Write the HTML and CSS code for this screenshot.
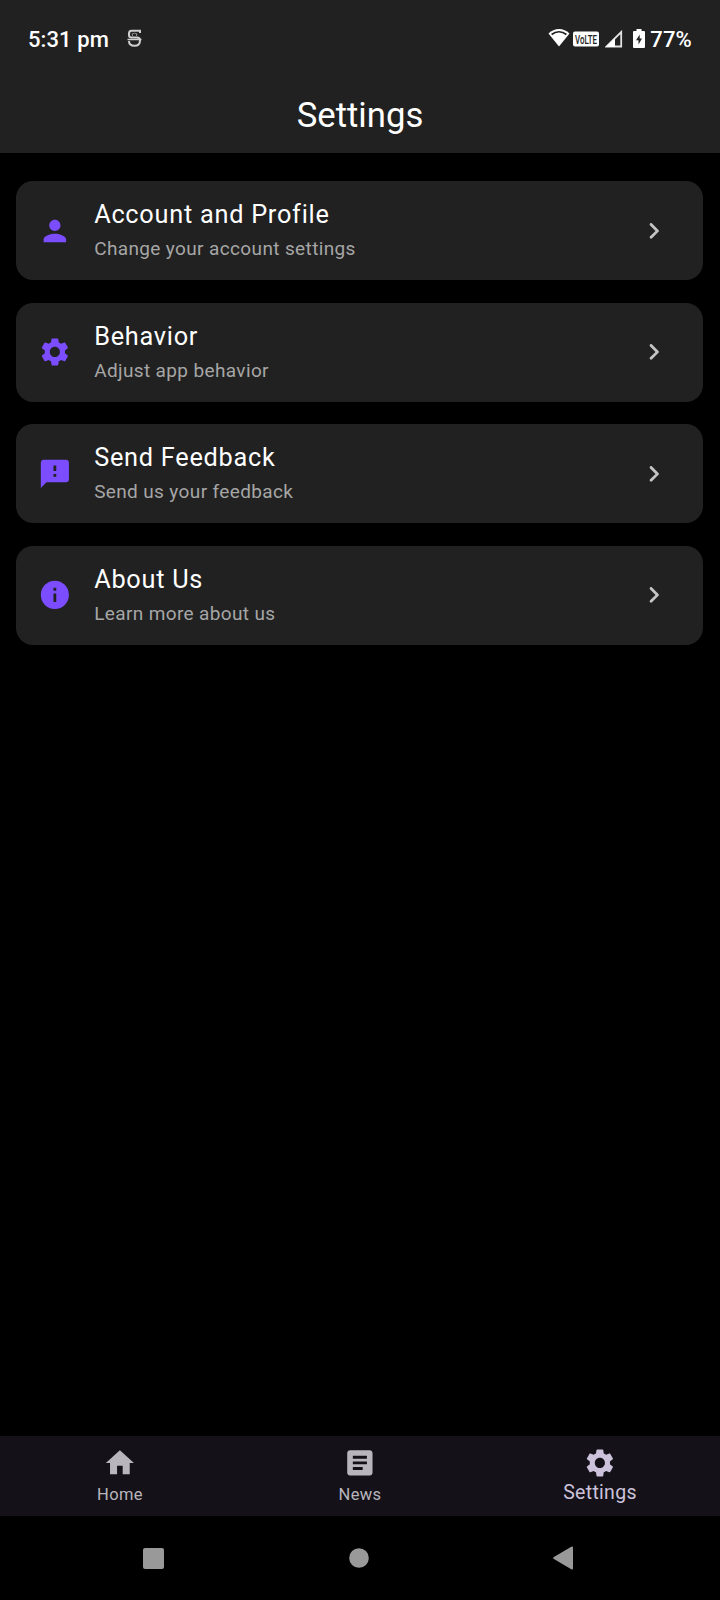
FILE: index.html
```html
<!DOCTYPE html>
<html lang="en">
<head>
<meta charset="utf-8">
<title>Settings</title>
<link rel="stylesheet" href="styles.css">
</head>
<body>
<div class="screen">
  <header class="top">
    <div class="status">
      <span class="time">5:31 pm</span>
      <svg class="s-icon" width="15" height="19" viewBox="0 0 15 19" fill="none" stroke="#cfcfcf"><path stroke-width="2" d="M13 4V1.800H4.500Q2 2 2 4.500V6Q2 8.500 4.500 8.500H10Q13 8.500 13 11.500Q13 16.800 7.500 16.800T2 12"/><path d="M4.500 5.200Q7.500 3 10.500 5.200M5.500 7V5M9.500 7V5" stroke-width="1" stroke="#8a8a8a"/><path d="M.5 10.500H14.500" stroke-width="1.500"/></svg>
      <span class="grow"></span>
      <svg class="wifi" width="22" height="20" viewBox="0 0 22 20"><path fill="#fff" d="M11 18.500.5 5.500Q5 1 11 1t10.500 4.500z"/><path d="M3.600 6.500Q7 3.800 11 3.800t7.400 2.700" fill="none" stroke="#212121" stroke-width="1.600"/></svg>
      <svg class="volte" width="26" height="16" viewBox="0 0 26 16"><rect width="26" height="15" y=".5" rx="2" fill="#fff"/><text x="2" y="12.700" textLength="22" lengthAdjust="spacingAndGlyphs" class="volte-text">VoLTE</text></svg>
      <svg class="signal" width="18" height="18" viewBox="0 0 18 18"><path d="M1.500 16.500H16.200V2z" fill="none" stroke="#e2e2e2" stroke-width="1.800"/><path d="M1 17 10 8v9z" fill="#fff"/></svg>
      <svg class="battery" width="12" height="19" viewBox="0 0 12 19"><path fill="#fff" d="M3.500 0h5v2H11q1 0 1 1v15q0 1-1 1H1q-1 0-1-1V3q0-1 1-1h2.500z"/><path fill="#212121" d="M6.700 5.500 3 11.300H5.500V15.500L9 9.500H6.700z"/></svg>
      <span class="percent">77%</span>
    </div>
    <h1 class="title">Settings</h1>
  </header>
  <main class="list">
    <div class="card">
      <svg class="icon" viewBox="0 0 24 24"><path d="M12 12c2.210 0 4-1.790 4-4s-1.790-4-4-4-4 1.790-4 4 1.790 4 4 4zm0 2c-2.670 0-8 1.340-8 4v2h16v-2c0-2.660-5.330-4-8-4z"/></svg>
      <div class="copy"><div class="name">Account and Profile</div><div class="desc">Change your account settings</div></div>
      <svg class="chevron" viewBox="0 0 24 24"><path d="M9.290 6.710c-.39.39-.39 1.020 0 1.410L13.170 12l-3.880 3.880c-.39.39-.39 1.020 0 1.410.39.39 1.020.39 1.410 0l4.590-4.590c.39-.39.39-1.020 0-1.410L10.700 6.700c-.38-.38-1.020-.38-1.410.01z"/></svg>
    </div>
    <div class="card">
      <svg class="icon" viewBox="0 0 24 24"><path d="M19.140 12.940c.04-.3.06-.61.06-.94 0-.32-.02-.64-.07-.94l2.030-1.580c.18-.14.23-.41.12-.61l-1.920-3.320c-.12-.22-.37-.29-.59-.22l-2.390.96c-.5-.38-1.030-.7-1.620-.94l-.36-2.540c-.04-.24-.24-.41-.48-.41h-3.840c-.24 0-.43.17-.47.41l-.36 2.540c-.59.24-1.130.57-1.620.94l-2.390-.96c-.22-.08-.47 0-.59.22L2.740 8.870c-.12.21-.08.47.12.61l2.030 1.580c-.05.3-.09.63-.09.94s.02.64.07.94l-2.030 1.580c-.18.14-.23.41-.12.61l1.920 3.320c.12.22.37.29.59.22l2.390-.96c.5.38 1.030.7 1.620.94l.36 2.540c.05.24.24.41.48.41h3.840c.24 0 .44-.17.47-.41l.36-2.540c.59-.24 1.130-.56 1.620-.94l2.390.96c.22.08.47 0 .59-.22l1.920-3.320c.12-.22.07-.47-.12-.61l-2.010-1.580zM12 15.600c-1.980 0-3.600-1.620-3.600-3.600s1.620-3.600 3.600-3.600 3.600 1.620 3.600 3.600-1.620 3.600-3.600 3.600z"/></svg>
      <div class="copy"><div class="name">Behavior</div><div class="desc">Adjust app behavior</div></div>
      <svg class="chevron" viewBox="0 0 24 24"><path d="M9.290 6.710c-.39.39-.39 1.020 0 1.410L13.170 12l-3.880 3.880c-.39.39-.39 1.020 0 1.410.39.39 1.020.39 1.410 0l4.590-4.590c.39-.39.39-1.020 0-1.410L10.700 6.700c-.38-.38-1.020-.38-1.410.01z"/></svg>
    </div>
    <div class="card">
      <svg class="icon" viewBox="0 0 24 24"><path d="M20 2H4c-1.100 0-1.990.9-1.990 2L2 22l4-4h14c1.100 0 2-.9 2-2V4c0-1.100-.9-2-2-2zm-7 12h-2v-2h2v2zm0-4h-2V6h2v4z"/></svg>
      <div class="copy"><div class="name">Send Feedback</div><div class="desc">Send us your feedback</div></div>
      <svg class="chevron" viewBox="0 0 24 24"><path d="M9.290 6.710c-.39.39-.39 1.020 0 1.410L13.170 12l-3.880 3.880c-.39.39-.39 1.020 0 1.410.39.39 1.020.39 1.410 0l4.590-4.590c.39-.39.39-1.020 0-1.410L10.700 6.700c-.38-.38-1.020-.38-1.410.01z"/></svg>
    </div>
    <div class="card">
      <svg class="icon" viewBox="0 0 24 24"><path d="M12 2C6.480 2 2 6.480 2 12s4.480 10 10 10 10-4.480 10-10S17.520 2 12 2zm1 15h-2v-6h2v6zm0-8h-2V7h2v2z"/></svg>
      <div class="copy"><div class="name">About Us</div><div class="desc">Learn more about us</div></div>
      <svg class="chevron" viewBox="0 0 24 24"><path d="M9.290 6.710c-.39.39-.39 1.020 0 1.410L13.170 12l-3.880 3.880c-.39.39-.39 1.020 0 1.410.39.39 1.020.39 1.410 0l4.590-4.590c.39-.39.39-1.020 0-1.410L10.700 6.700c-.38-.38-1.020-.38-1.410.01z"/></svg>
    </div>
  </main>
  <nav class="tabs">
    <div class="tab">
      <svg class="tab-icon" viewBox="0 0 24 24"><path d="M10 20v-6h4v6h5v-8h3L12 3 2 12h3v8z"/></svg>
      <span class="label">Home</span>
    </div>
    <div class="tab">
      <svg class="tab-icon" viewBox="0 0 24 24"><path d="M19 3H5c-1.100 0-2 .9-2 2v14c0 1.100.9 2 2 2h14c1.100 0 2-.9 2-2V5c0-1.100-.9-2-2-2zm-5 14H7v-2h7v2zm3-4H7v-2h10v2zm0-4H7V7h10v2z"/></svg>
      <span class="label">News</span>
    </div>
    <div class="tab active">
      <svg class="tab-icon" viewBox="0 0 24 24"><path d="M19.140 12.940c.04-.3.06-.61.06-.94 0-.32-.02-.64-.07-.94l2.030-1.580c.18-.14.23-.41.12-.61l-1.920-3.320c-.12-.22-.37-.29-.59-.22l-2.390.96c-.5-.38-1.030-.7-1.620-.94l-.36-2.540c-.04-.24-.24-.41-.48-.41h-3.840c-.24 0-.43.17-.47.41l-.36 2.540c-.59.24-1.130.57-1.620.94l-2.390-.96c-.22-.08-.47 0-.59.22L2.740 8.870c-.12.21-.08.47.12.61l2.030 1.580c-.05.3-.09.63-.09.94s.02.64.07.94l-2.030 1.580c-.18.14-.23.41-.12.61l1.920 3.320c.12.22.37.29.59.22l2.390-.96c.5.38 1.030.7 1.620.94l.36 2.540c.05.24.24.41.48.41h3.840c.24 0 .44-.17.47-.41l.36-2.540c.59-.24 1.130-.56 1.620-.94l2.390.96c.22.08.47 0 .59-.22l1.920-3.320c.12-.22.07-.47-.12-.61l-2.010-1.580zM12 15.600c-1.980 0-3.600-1.620-3.600-3.600s1.620-3.600 3.600-3.600 3.600 1.620 3.600 3.600-1.620 3.600-3.600 3.600z"/></svg>
      <span class="label">Settings</span>
    </div>
  </nav>
  <footer class="system">
    <svg width="21" height="21" viewBox="0 0 21 21"><rect width="21" height="21" rx="2"/></svg>
    <svg width="20" height="20" viewBox="0 0 20 20"><circle cx="10" cy="10" r="9.800"/></svg>
    <svg width="20" height="24" viewBox="0 0 20 24"><path d="M18.300.7Q20 0 20 1.800V22.200Q20 24 18.300 23.300L.9 13Q-.6 12 .9 11z"/></svg>
  </footer>
</div>
</body>
</html>
```
FILE: styles.css
```css
* { box-sizing: border-box; }
body { margin: 0; background: #000; font-family: Roboto, sans-serif; }
svg { display: block; flex: none; }
.screen { width: 720px; height: 1600px; display: flex; flex-direction: column; background: #000; }
.top { height: 153px; background: #212121; }
.status { height: 77px; padding: 0 28px; display: flex; align-items: center; color: #fff; font-size: 22px; font-weight: 500; line-height: 26px; }
.time { letter-spacing: .1px; padding-top: 3px; }
.s-icon { margin-left: 18px; margin-top: -1px; }
.grow { flex: 1; }
.wifi { margin-right: 3px; margin-top: -1px; }
.volte { margin-right: 6px; margin-top: 1px; overflow: visible; }
.volte-text { font-size: 13px; line-height: 13px; font-weight: 500; fill: #212121; }
.signal { margin-right: 10px; }
.battery { margin-right: 5px; margin-top: -1px; }
.percent { padding-top: 3px; letter-spacing: .2px; }
.title { margin: 0; padding-top: 18px; text-align: center; color: #fff; font-size: 34.700px; line-height: 40px; font-weight: 400; }
.list { flex: 1; padding: 28px 16.600px 0 16.400px; display: flex; flex-direction: column; gap: 22.500px; }
.card { height: 99px; border-radius: 17px; background: #212121; padding: 0 32.400px 0 22px; display: flex; align-items: center; }
.icon { width: 33.750px; height: 33.750px; fill: #7c4dff; }
.chevron { width: 33.750px; height: 33.750px; fill: #c4c4c4; }
.copy { flex: 1; padding: 3.500px 0 0 22px; white-space: nowrap; }
.name { color: #fff; font-size: 25.300px; line-height: 34px; letter-spacing: .74px; }
.desc { color: #a6a6a6; font-size: 19px; line-height: 34px; letter-spacing: .37px; }
.tabs { height: 80px; background: #141218; display: flex; }
.tab { flex: 1; display: flex; flex-direction: column; align-items: center; padding-top: 10px; color: #b8b6bc; }
.tab-icon { width: 33.750px; height: 33.750px; fill: currentColor; }
.label { font-size: 16.500px; line-height: 20px; letter-spacing: .35px; margin-top: 5px; }
.active { color: #ccc2dc; }
.active .label { font-size: 19.500px; line-height: 24px; letter-spacing: .3px; margin-top: 1px; }
.system { height: 84px; padding: 0 147px 0 143px; display: flex; align-items: center; justify-content: space-between; fill: #999; }
```
